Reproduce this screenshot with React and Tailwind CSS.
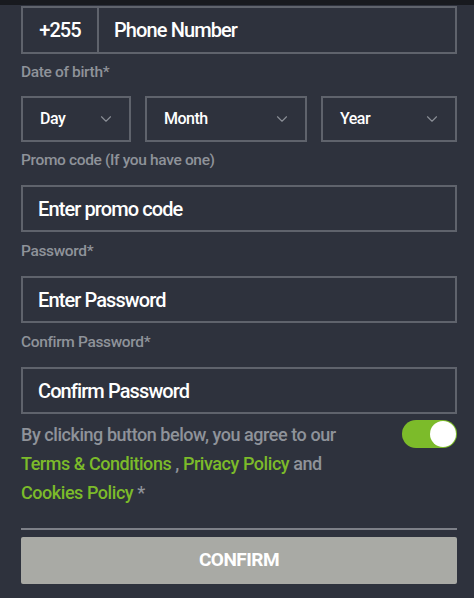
import { ChevronDown } from 'lucide-react';

function Field({ placeholder }) {
  return (
    <div className="mt-[15px] h-[47px] border-2 border-[#5f636c] flex items-center pl-[15px] text-[20px] font-medium text-white tracking-[-0.9px]">
      {placeholder}
    </div>
  );
}

function Select({ label, className }) {
  return (
    <div className={`h-[46px] border-2 border-[#5f636c] flex items-center justify-between pl-[17px] pr-[14px] text-[16px] font-medium text-white tracking-[-0.5px] ${className}`}>
      <span>{label}</span>
      <ChevronDown className="w-[18px] h-[18px] text-[#8a8e96]" strokeWidth={1.5} />
    </div>
  );
}

function Label({ children, className = '' }) {
  return (
    <div className={`h-[20px] leading-[20px] text-[15.5px] font-medium text-[#8f939a] tracking-[-0.35px] ${className}`}>
      {children}
    </div>
  );
}

export default function App() {
  return (
    <div className="w-[474px] h-[598px] bg-[#2e323d] font-['Roboto','Liberation_Sans',sans-serif] overflow-hidden">
      <div className="h-[5px] bg-[#181a1f]" />
      <div className="pl-[21px] pr-[17px] pt-[1px]">
        {/* Phone */}
        <div className="h-[48px] border-2 border-[#5f636c] flex text-[20px] font-medium text-white tracking-[-0.9px]">
          <div className="w-[76px] border-r-2 border-[#5f636c] flex items-center justify-center">+255</div>
          <div className="flex items-center pl-[15px]">Phone Number</div>
        </div>

        <Label className="mt-[8px]">Date of birth*</Label>
        <div className="mt-[14px] flex gap-[14px]">
          <Select label="Day" className="w-[110px]" />
          <Select label="Month" className="w-[162px]" />
          <Select label="Year" className="flex-1" />
        </div>

        <Label className="mt-[8px]">Promo code (If you have one)</Label>
        <Field placeholder="Enter promo code" />

        <Label className="mt-[9px]">Password*</Label>
        <Field placeholder="Enter Password" />

        <Label className="mt-[9px]">Confirm Password*</Label>
        <Field placeholder="Confirm Password" />

        {/* Terms */}
        <div className="mt-[6px] flex justify-between">
          <div className="text-[18px] leading-[29px] font-medium text-[#8f939a] tracking-[-0.45px]">
            <div>By clicking button below, you agree to our</div>
            <div>
              <span className="text-[#7cbb2a]">Terms &amp; Conditions</span> ,{' '}
              <span className="text-[#7cbb2a]">Privacy Policy</span> and
            </div>
            <div>
              <span className="text-[#7cbb2a]">Cookies Policy</span> *
            </div>
          </div>
          <div className="w-[55px] h-[28px] rounded-full bg-[#7cbb2a] relative shrink-0">
            <div className="absolute right-[1px] top-[1px] w-[26px] h-[26px] rounded-full bg-white" />
          </div>
        </div>

        <div className="mt-[21px] h-[2px] bg-[#7d8088]" />
        <div className="mt-[7px] h-[47px] rounded-[2px] bg-[#a9aaa5] flex items-center justify-center text-white text-[19px] font-bold tracking-[-0.5px]">
          CONFIRM
        </div>
      </div>
    </div>
  );
}
